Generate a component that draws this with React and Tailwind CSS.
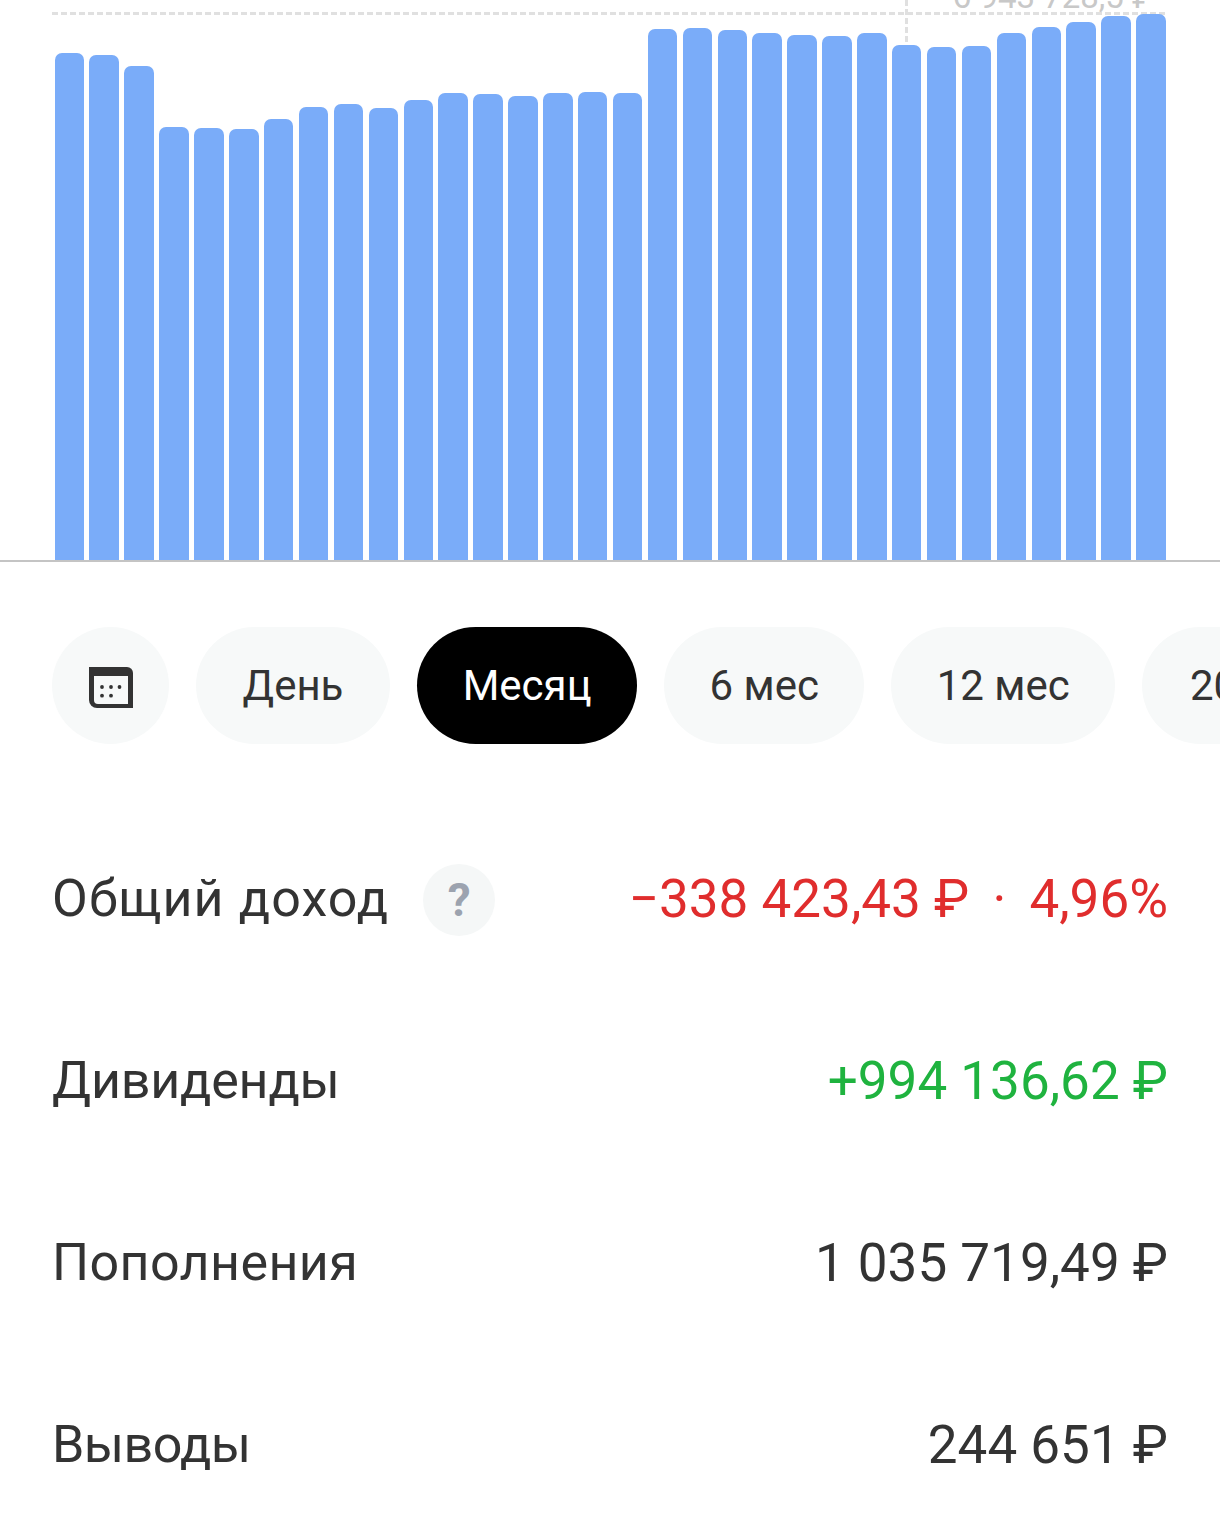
const tops = [53,55,66,127,128,129,119,107,104,108,100,93,94,96,93,92,93,29,28,30,33,35,36,33,45,47,46,33,27,22,16,14];

function Pill({ children, active, className = "" }) {
  return (
    <div className={`flex h-[117px] shrink-0 items-center justify-center rounded-full text-[42px] ${active ? "bg-black text-white" : "bg-[#f7f9f9] text-[#333333]"} ${className}`}>
      {children}
    </div>
  );
}

function Row({ label, labelClass = "", children, valueClass, extra, className = "" }) {
  return (
    <div className={`flex items-center justify-between ${className}`}>
      <div className="flex items-center gap-[34px] text-[52px] text-[#333333]">
        <span className={labelClass}>{label}</span>
        {extra}
      </div>
      <div className={`text-[53px] ${valueClass}`}>{children}</div>
    </div>
  );
}

export default function App() {
  return (
    <div className="h-[1538px] w-[1220px] overflow-hidden bg-white font-['Roboto','Noto_Sans',sans-serif]">
      <div className="relative h-[562px] border-b-2 border-[#c4c4c4]">
        <div className="absolute left-[52px] right-[54px] top-[12px] h-[3px] bg-[repeating-linear-gradient(90deg,#e0e0e0_0,#e0e0e0_6px,transparent_6px,transparent_9px)]" />
        <div className="absolute left-[905px] top-0 h-[46px] w-[3px] bg-[repeating-linear-gradient(180deg,#e0e0e0_0,#e0e0e0_6px,transparent_6px,transparent_9px)]" />
        <div className="absolute right-[66px] top-[-21px] text-[33px] leading-[36px] text-[#c8c8c8]">6 943 728,5 ₽</div>
        <div className="relative flex h-full items-end gap-[5.4px] pl-[54.6px]">
          {tops.map((t, i) => (
            <div key={i} className="w-[29.5px] shrink-0 rounded-t-[7px] bg-[#7aacf9]" style={{ height: 560 - t }} />
          ))}
        </div>
      </div>

      <div className="mt-[65px] flex gap-[27px] overflow-hidden pl-[52px]">
        <Pill className="w-[117px]">
          <svg className="ml-px mt-[3px]" width="44" height="41" viewBox="0 0 44 41">
            <path d="M0 0H38a6 6 0 0 1 6 6V41H8a8 8 0 0 1-8-8Z" fill="#333333" />
            <path d="M5 9H39V37H9a4 4 0 0 1-4-4Z" fill="#f7f9f9" />
            <g fill="#333333">
              <circle cx="13" cy="20" r="1.9" /><circle cx="22" cy="20" r="1.9" /><circle cx="30.5" cy="20" r="1.9" />
              <circle cx="13" cy="28.7" r="1.9" /><circle cx="22" cy="28.7" r="1.9" />
            </g>
          </svg>
        </Pill>
        <Pill className="w-[194px]">День</Pill>
        <Pill active className="w-[220.2px]">Месяц</Pill>
        <Pill className="w-[200px]">6 мес</Pill>
        <Pill className="w-[224px]">12 мес</Pill>
        <Pill className="w-[190px]">2023</Pill>
      </div>

      <div className="mt-[119px] px-[52px] leading-[60px]">
        <Row
          label="Общий доход"
          labelClass="tracking-[1.1px]"
          valueClass="text-[#e02d2d]"
          extra={<div className="flex h-[72px] w-[72px] translate-y-px items-center justify-center rounded-full bg-[#f5f7f7] text-[46px] font-bold text-[#9ca3af]">?</div>}
        >
          −338 423,43 ₽ <span className="mx-[10px]">·</span> 4,96%
        </Row>
        <Row label="Дивиденды" labelClass="tracking-[-0.2px]" valueClass="text-[#1fb33f]" className="mt-[116px]">+994 136,62 ₽</Row>
        <Row label="Пополнения" labelClass="tracking-[0.4px]" valueClass="text-[#333333]" className="mt-[122px]">1 035 719,49 ₽</Row>
        <Row label="Выводы" labelClass="tracking-[-0.6px]" valueClass="text-[#333333]" className="mt-[122px]">244 651 ₽</Row>
      </div>
    </div>
  );
}
